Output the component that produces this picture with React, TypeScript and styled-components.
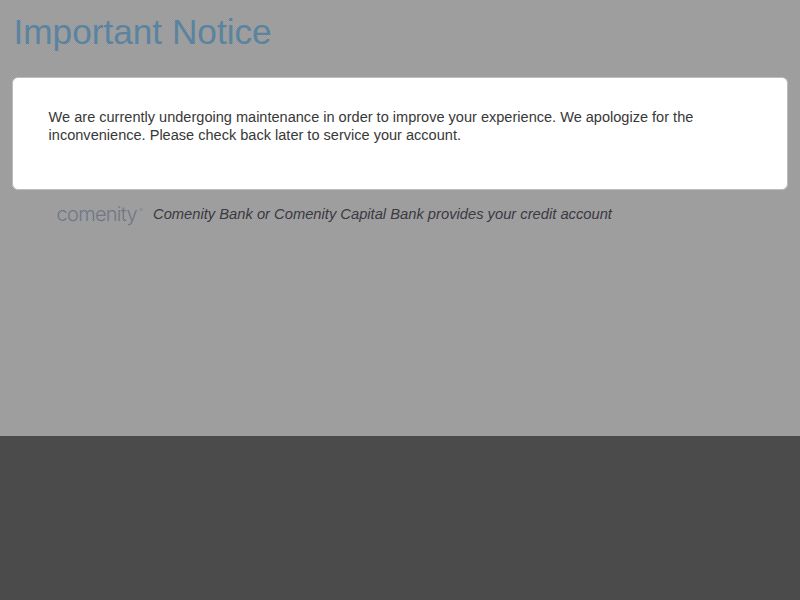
import React from "react";
import styled, { createGlobalStyle } from "styled-components";

const Global = createGlobalStyle`
  html, body { margin: 0; padding: 0; height: 100%; overflow: hidden; }
  body { font-family: "Liberation Sans", Arial, sans-serif; background: #4a4a4a; }
`;

const Page = styled.div`
  position: relative;
  width: 800px;
  height: 600px;
  display: flex;
  flex-direction: column;

  &::after {
    content: "";
    position: absolute;
    inset: 0;
    pointer-events: none;
    background: repeating-conic-gradient(rgba(0, 0, 0, 0.025) 0 25%, rgba(255, 255, 255, 0.02) 0 50%) 0 0 / 2px 2px;
  }
`;

const Main = styled.main`
  height: 436px;
  box-sizing: border-box;
  padding: 12px 12px 0;
  background: #9f9f9f;
`;

const Footer = styled.footer`
  flex: 1;
  background: #4a4a4a;
`;

const Title = styled.h1`
  margin: 0 0 0 1.5px;
  font-size: 35.2px;
  line-height: 40px;
  font-weight: 400;
  color: #5a84a1;
`;

const Card = styled.section`
  position: relative;
  z-index: 1;
  margin-top: 25px;
  box-sizing: border-box;
  height: 113px;
  padding: 30px 35.6px;
  background: #fff;
  border: 1px solid #bdbdbd;
  border-radius: 6px;
`;

const Message = styled.p`
  margin: 0;
  font-size: 14.56px;
  line-height: 18px;
  color: #383838;
`;

const Provider = styled.div`
  display: flex;
  align-items: center;
  gap: 11px;
  margin: 12px 0 0 44.5px;
  height: 24px;
`;

const Logo = styled.span`
  position: relative;
  width: 85.5px;
  font-family: Inter, sans-serif;
  font-weight: 300;
  font-size: 20px;
  letter-spacing: -0.7px;
  color: #6f7788;
  white-space: nowrap;
`;

const Mark = styled.span`
  position: absolute;
  top: 5px;
  right: 0;
  font-size: 5px;
`;

const ProviderText = styled.em`
  font-size: 14.72px;
  color: #3a3741;
`;

export default function App() {
  return (
    <>
      <Global />
      <Page>
        <Main>
          <Title>Important Notice</Title>
          <Card>
            <Message>
              We are currently undergoing maintenance in order to improve your experience. We apologize for the inconvenience. Please check back later to service your account.
            </Message>
          </Card>
          <Provider>
            <Logo>comenity<Mark>®</Mark></Logo>
            <ProviderText>Comenity Bank or Comenity Capital Bank provides your credit account</ProviderText>
          </Provider>
        </Main>
        <Footer />
      </Page>
    </>
  );
}
